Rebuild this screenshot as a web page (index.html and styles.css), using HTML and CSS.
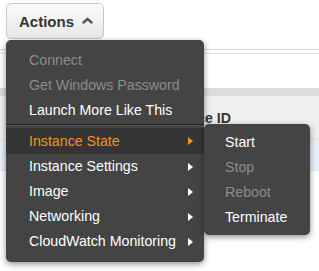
FILE: index.html
```html
<!DOCTYPE html>
<html lang="en">
<head>
    <meta charset="UTF-8">
    <title>Actions menu</title>
    <link rel="stylesheet" href="styles.css">
</head>
<body>
    <!-- toolbar -->
    <div class="toolbar">
        <button class="actions-btn">
            Actions
            <svg class="caret" width="11" height="7" viewBox="0 0 11 7">
                <path d="M1.5 5.5 L5.5 1.8 L9.5 5.5" fill="none" stroke="#555" stroke-width="2.4" stroke-linecap="round" stroke-linejoin="round"/>
            </svg>
        </button>
    </div>

    <!-- table behind the menu -->
    <div class="table">
        <div class="filter-row"></div>
        <div class="band"></div>
        <div class="head-row">
            <div class="head-cell"><span>Instance ID</span></div>
        </div>
        <div class="row selected"></div>
        <div class="row"></div>
    </div>

    <!-- actions menu -->
    <ul class="menu">
        <li class="item disabled">Connect</li>
        <li class="item disabled">Get Windows Password</li>
        <li class="item">Launch More Like This</li>
        <li class="divider"></li>
        <li class="item sub active">
            Instance State
            <ul class="menu submenu">
                <li class="item">Start</li>
                <li class="item disabled">Stop</li>
                <li class="item disabled">Reboot</li>
                <li class="item">Terminate</li>
            </ul>
        </li>
        <li class="item sub">Instance Settings</li>
        <li class="item sub">Image</li>
        <li class="item sub">Networking</li>
        <li class="item sub">CloudWatch Monitoring</li>
    </ul>
</body>
</html>
```

FILE: styles.css
```css
body {
    margin: 0;
    width: 319px;
    height: 271px;
    overflow: hidden;
    background: #fff;
    font-family: "Liberation Sans", Arial, sans-serif;
    position: relative;
}

/* toolbar */
.toolbar {
    height: 49px;
    padding: 3px 0 0 6px;
    box-sizing: border-box;
}
.actions-btn {
    width: 98px;
    height: 36px;
    padding: 0 0 0 12px;
    display: flex;
    align-items: center;
    gap: 8px;
    border: 1px solid #c8c8c8;
    border-radius: 5px;
    background: linear-gradient(#fafafa, #e9e9e9);
    color: #333;
    font-family: inherit;
    font-size: 15px;
    font-weight: bold;
}
.caret {
    margin-top: -2px;
}

/* table */
.filter-row {
    height: 38px;
    border-top: 1px solid #d3d3d3;
    box-shadow: inset 0 3px 0 #fff, inset 0 4px 0 #e2e2e2;
}
.band {
    height: 8px;
    background: #dcdcdc;
}
.head-row {
    height: 43px;
    background: #efefef;
    display: flex;
    align-items: center;
}
/* only the tail of the header peeks out from under the menu */
.head-cell {
    margin-left: 204px;
    width: 27px;
    overflow: hidden;
    display: flex;
    justify-content: flex-end;
    white-space: nowrap;
    font-size: 14.2px;
    font-weight: bold;
    color: #333;
}
.row {
    height: 30px;
    border-top: 1px solid #e3e3e3;
}
.row.selected {
    background: #e8f0fb;
}

/* menu */
.menu {
    list-style: none;
    margin: 0;
    padding: 8px 0;
    position: absolute;
    left: 6px;
    top: 40px;
    width: 198px;
    background: #444;
    border-radius: 5px;
    box-shadow: 0 2px 6px rgba(0, 0, 0, 0.45);
}
.item {
    height: 25px;
    line-height: 25px;
    padding-left: 23px;
    font-size: 14.2px;
    color: #fff;
    position: relative;
    white-space: nowrap;
}
.item.disabled {
    color: #8c8c8c;
}
.item.sub::after {
    content: "";
    position: absolute;
    right: 11px;
    top: 9px;
    border-left: 5px solid #fff;
    border-top: 4px solid transparent;
    border-bottom: 4px solid transparent;
}
.item.active {
    background: #353535;
    color: #f7931e;
    height: 26px;
    line-height: 26px;
}
.item.active::after {
    border-left-color: #f7931e;
}
.divider {
    height: 1px;
    margin: 1px 0 2px;
    background: #222;
    border-bottom: 1px solid #555;
}

/* submenu */
.submenu {
    left: 198px;
    top: -4px;
    width: 106px;
    padding: 6px 0 5px;
}
.submenu .item {
    padding-left: 21px;
}
```
